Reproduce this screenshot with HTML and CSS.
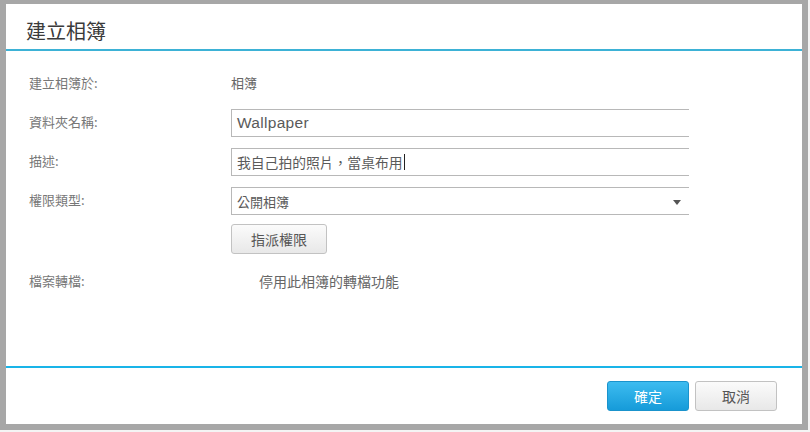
FILE: index.html
```html
<!DOCTYPE html>
<html lang="zh-Hant">
<head>
<meta charset="utf-8">
<title>建立相簿</title>
<link rel="stylesheet" href="styles.css">
</head>
<body>
<div class="dialog">
  <div class="header"><h1 class="title">建立相簿</h1></div>
  <div class="body">
    <div class="form">
      <div class="label">建立相簿於:</div>
      <div class="value">相簿</div>

      <div class="label">資料夾名稱:</div>
      <div class="field latin">Wallpaper</div>

      <div class="label">描述:</div>
      <div class="field desc">我自己拍的照片，當桌布用<span class="caret"></span></div>

      <div class="label">權限類型:</div>
      <div class="field select">公開相簿<span class="arrow"></span></div>

      <div class="label"></div>
      <div class="btnrow"><button class="btn">指派權限</button></div>

      <div class="label last">檔案轉檔:</div>
      <div class="value indent last">停用此相簿的轉檔功能</div>
    </div>
  </div>
  <div class="footer">
    <button class="btn primary">確定</button>
    <button class="btn">取消</button>
  </div>
</div>
</body>
</html>
```

FILE: styles.css
```css
* { box-sizing: border-box; }
html, body { margin: 0; padding: 0; background: #f4f4f4; }
body {
  width: 810px;
  height: 432px;
  font-family: "Liberation Sans", "Noto Sans CJK TC", sans-serif;
  color: #555;
  overflow: hidden;
}
.dialog {
  width: 808px;
  height: 430px;
  background: #fff;
  border-style: solid;
  border-color: #a7a7a7;
  border-width: 4px 6px 6px 6px;
  display: flex;
  flex-direction: column;
}
.header {
  height: 47px;
  padding: 9px 0 0 20px;
  border-bottom: 2px solid #3db2d6;
  display: flex;
  align-items: center;
}
.title {
  margin: 0;
  font-family: "Noto Sans CJK TC", sans-serif;
  font-weight: 400;
  font-size: 20px;
  line-height: 28px;
  color: #3a3a3a;
}
.body {
  flex: 1;
  padding: 19px 0 0 23px;
}
.form {
  display: grid;
  grid-template-columns: 202px 458px;
  grid-auto-rows: 28px;
  row-gap: 11px;
}
.label, .value {
  font-family: "Noto Sans CJK TC", sans-serif;
  font-size: 13px;
  line-height: 26px;
  color: #777;
}
.value { color: #666; }
.value.indent { padding-left: 28px; font-size: 14px; }
.last { margin-top: 3px; }
.field {
  height: 28px;
  border: 1px solid #b8b8b8;
  border-right: none;
  padding-left: 5px;
  display: flex;
  align-items: center;
  background: #fff;
  position: relative;
  color: #555;
}
.latin {
  font-family: "Liberation Sans", sans-serif;
  font-size: 15.5px;
  letter-spacing: 0.3px;
  color: #5a5a5a;
}
.desc, .select {
  font-family: "Noto Sans CJK TC", sans-serif;
  font-size: 13.8px;
  color: #5a5a5a;
}
.select { font-size: 13px; }
.caret {
  display: inline-block;
  width: 1px;
  height: 16px;
  background: #222;
  margin-left: 1px;
}
.arrow {
  position: absolute;
  right: 8px;
  top: 12px;
  width: 0;
  height: 0;
  border-left: 4.5px solid transparent;
  border-right: 4.5px solid transparent;
  border-top: 5px solid #555;
}
.btnrow { height: 30px; margin-top: -2px; }
.btn {
  height: 30px;
  width: 96px;
  border: 1px solid #c2c2c2;
  border-radius: 3px;
  background: linear-gradient(#fbfbfb, #e8e8e8);
  font-family: "Noto Sans CJK TC", sans-serif;
  font-size: 14px;
  color: #555;
  padding: 0;
  cursor: pointer;
}
.footer {
  height: 58px;
  border-top: 2px solid #19b4e8;
  padding: 13px 25px 0 0;
  display: flex;
  justify-content: flex-end;
  align-items: flex-start;
  gap: 6px;
}
.footer .btn { width: 82px; }
.btn.primary {
  background: linear-gradient(#3dbcf0, #169bd9);
  border-color: #1a93cc;
  color: #fff;
}
```
